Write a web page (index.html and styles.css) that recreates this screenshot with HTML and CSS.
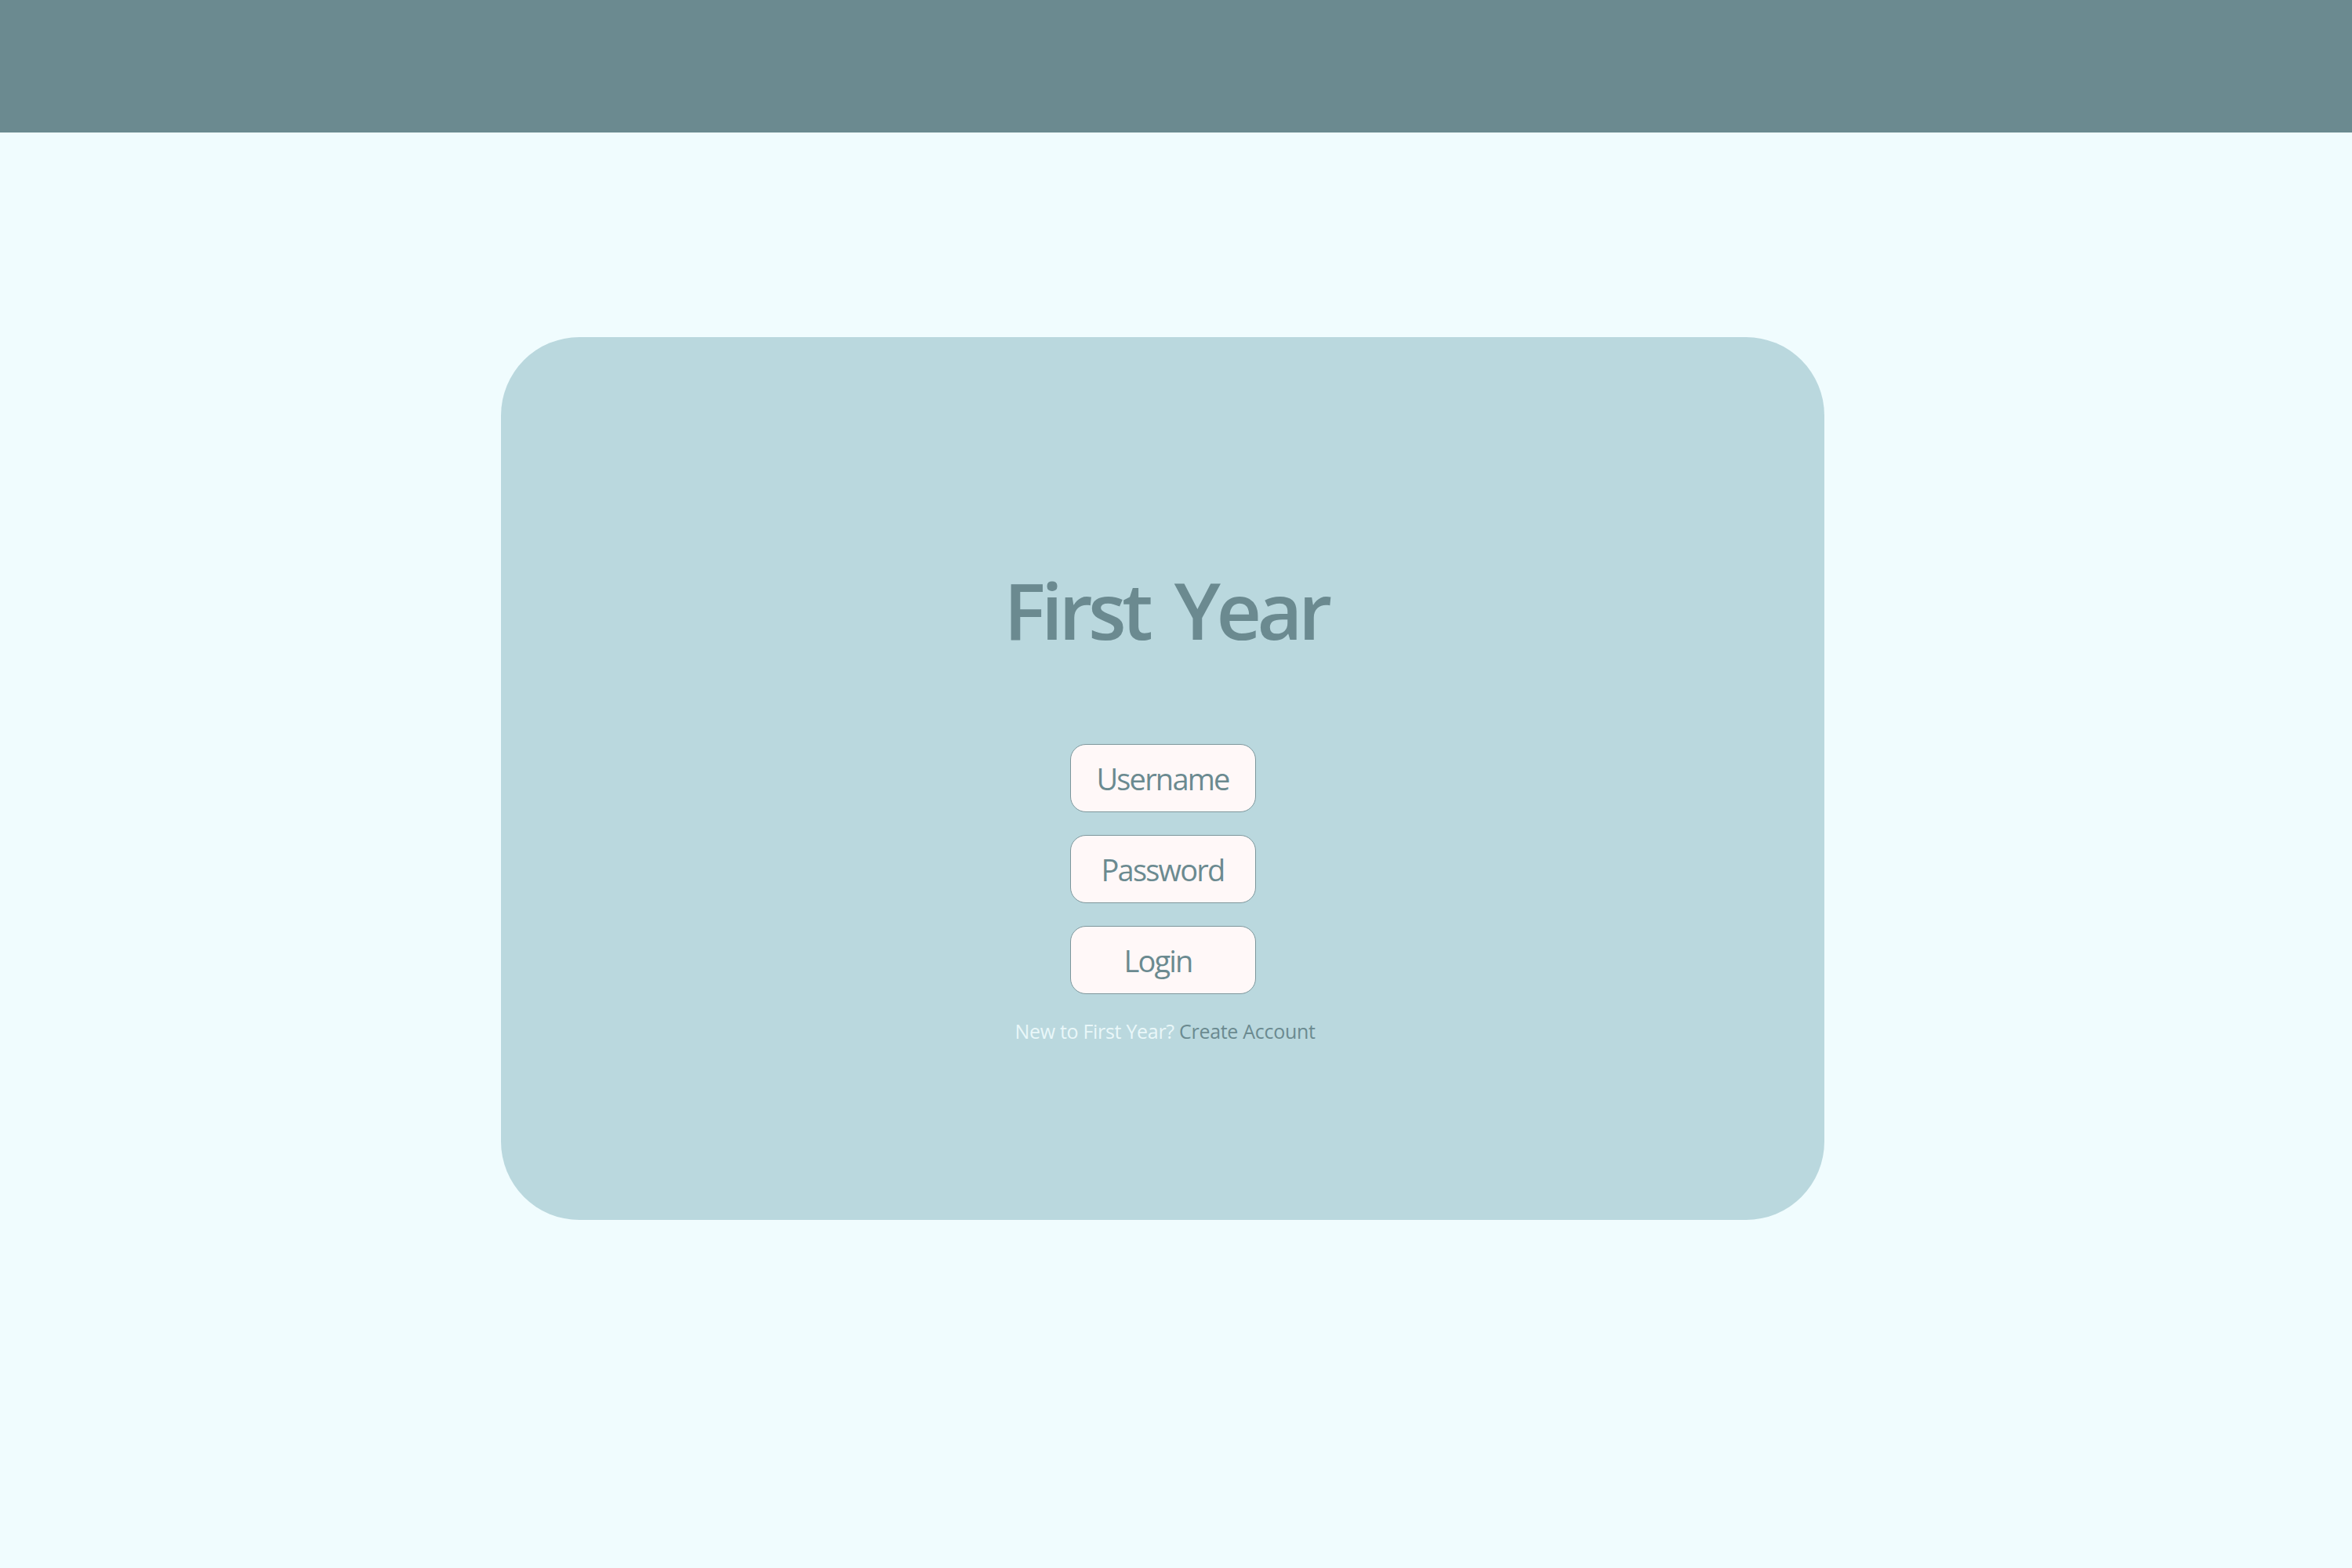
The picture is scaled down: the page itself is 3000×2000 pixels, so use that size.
FILE: index.html
```html
<!DOCTYPE html>
<html lang="en">
<head>
<meta charset="utf-8">
<title>First Year</title>
<link rel="stylesheet" href="styles.css">
</head>
<body>
<header class="topbar"></header>
<main class="page">
  <section class="card">
    <h1 class="title">First Year</h1>
    <form class="form">
      <input class="field" type="text" placeholder="Username">
      <input class="field" type="password" placeholder="Password">
      <button class="field btn" type="button">Login</button>
    </form>
    <p class="signup"><span class="muted">New to First Year?</span> <a class="link" href="#">Create Account</a></p>
  </section>
</main>
</body>
</html>
```
FILE: styles.css
```css
html, body {
  margin: 0;
  padding: 0;
}
body {
  background: #f0fcfe;
  font-family: "Open Sans", "Noto Sans", sans-serif;
  color: #6b8a90;
  min-height: 2000px;
}
.topbar {
  height: 169px;
  background: #6b8a90;
}
.page {
  padding-top: 261px;
  padding-left: 639px;
}
.card {
  box-sizing: border-box;
  width: 1688px;
  height: 1126px;
  background: #bad8de;
  border-radius: 100px;
  padding-top: 297px;
  display: flex;
  flex-direction: column;
  align-items: center;
}
.title {
  margin: 0;
  padding-left: 8px;
  font-size: 100px;
  line-height: 100px;
  font-weight: 600;
  letter-spacing: -5.5px;
  word-spacing: 12px;
  color: #6b8a90;
}
.form {
  margin-top: 122px;
  display: flex;
  flex-direction: column;
  gap: 29px;
}
.field {
  box-sizing: border-box;
  width: 237px;
  height: 87px;
  border: 1.5px solid #7d979c;
  border-radius: 20px;
  background: #fff8f8;
  font-family: inherit;
  font-size: 38px;
  letter-spacing: -1.8px;
  color: #6b8a90;
  text-align: center;
  padding: 0;
  outline: none;
}
.field::placeholder {
  color: #6b8a90;
  opacity: 1;
}
.btn {
  cursor: pointer;
  padding-right: 12px;
}
.signup {
  margin: 35px 0 0;
  padding-left: 6px;
  font-size: 25px;
  line-height: 25px;
  letter-spacing: -0.3px;
}
.muted {
  color: #e9f7f9;
}
.link {
  color: #6b8a90;
  text-decoration: none;
}
```
